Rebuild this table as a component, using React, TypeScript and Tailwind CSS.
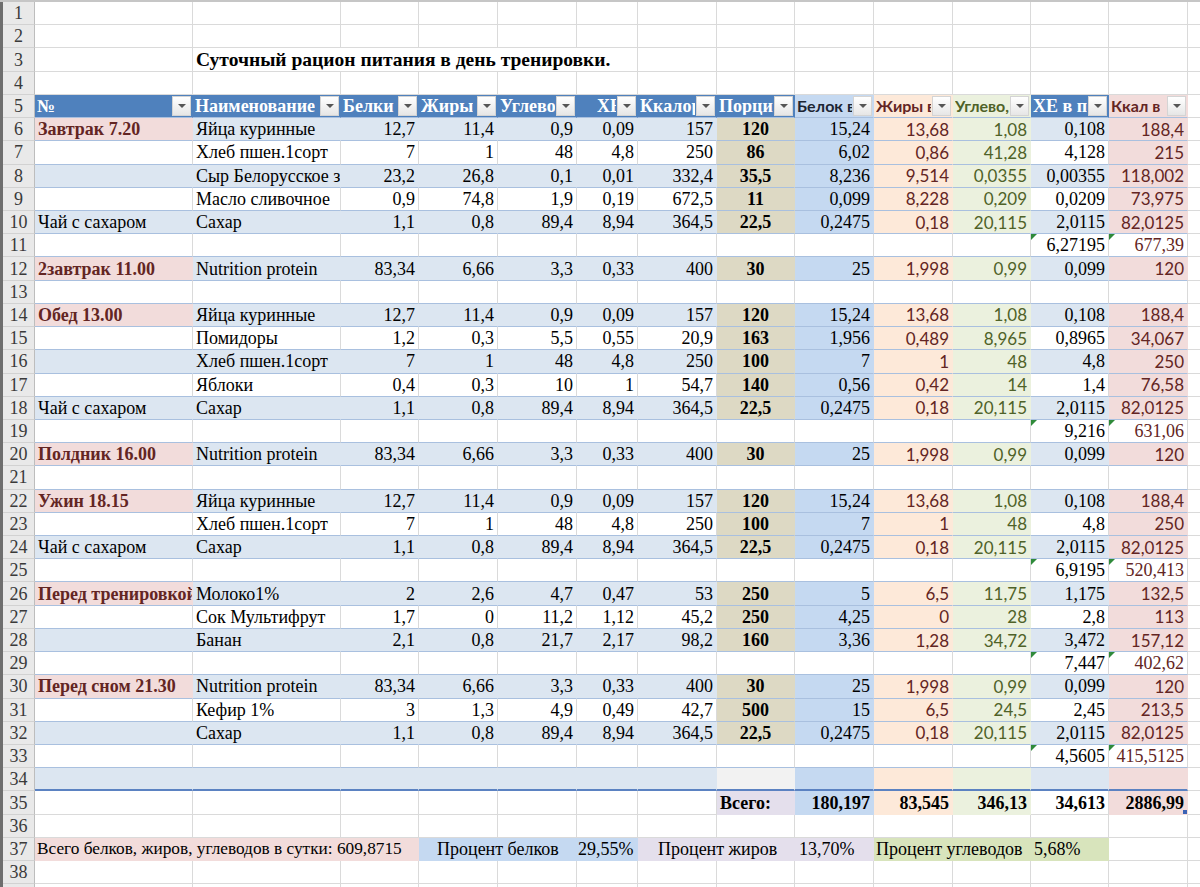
import React from 'react';

const SANS = "font-['Lato',sans-serif] text-[17px]";
const SANSH = "font-['Lato',sans-serif] text-[16px]";

const WIDTHS = [
  'w-[158px]', 'w-[148px]', 'w-[78px]', 'w-[79px]', 'w-[79px]', 'w-[61px]', 'w-[79px]',
  'w-[78px]', 'w-[79px]', 'w-[79px]', 'w-[78px]', 'w-[78px]', 'w-[79px]',
];

const BG = {
  band: 'bg-[#dce6f1]',
  hdr: 'bg-[#4f81bd]',
  pink: 'bg-[#f2dcdb]',
  khaki: 'bg-[#ddd9c4]',
  iblue: 'bg-[#c5d9f1]',
  peach: 'bg-[#fde9d9]',
  green: 'bg-[#ebf1de]',
  purple: 'bg-[#e4dfec]',
  gray: 'bg-[#f2f2f2]',
  green2: 'bg-[#d8e4bc]',
};

type CellSpec = {
  t?: string;
  bg?: string;
  al?: 'l' | 'r' | 'c';
  f?: string;
  tri?: boolean;
  btn?: boolean;
  w?: string;
  pad?: string;
  handle?: boolean;
};

type RowKind = 'plain' | 'table' | 'tableEnd';

const MEALS: Record<number, string> = {
  6: 'Завтрак 7.20',
  12: '2завтрак 11.00',
  14: 'Обед 13.00',
  20: 'Полдник 16.00',
  22: 'Ужин 18.15',
  26: 'Перед тренировкой',
  30: 'Перед сном 21.30',
};
const TEA = [10, 18, 24];

const EGGS = ['Яйца куринные', '12,7', '11,4', '0,9', '0,09', '157', '120', '15,24', '13,68', '1,08', '0,108', '188,4'];
const SUGAR = ['Сахар', '1,1', '0,8', '89,4', '8,94', '364,5', '22,5', '0,2475', '0,18', '20,115', '2,0115', '82,0125'];
const PROTEIN = ['Nutrition protein', '83,34', '6,66', '3,3', '0,33', '400', '30', '25', '1,998', '0,99', '0,099', '120'];
const BREAD100 = ['Хлеб пшен.1сорт', '7', '1', '48', '4,8', '250', '100', '7', '1', '48', '4,8', '250'];

const D: Record<number, string[]> = {
  6: EGGS,
  7: ['Хлеб пшен.1сорт', '7', '1', '48', '4,8', '250', '86', '6,02', '0,86', '41,28', '4,128', '215'],
  8: ['Сыр Белорусское золотое', '23,2', '26,8', '0,1', '0,01', '332,4', '35,5', '8,236', '9,514', '0,0355', '0,00355', '118,002'],
  9: ['Масло сливочное', '0,9', '74,8', '1,9', '0,19', '672,5', '11', '0,099', '8,228', '0,209', '0,0209', '73,975'],
  10: SUGAR,
  12: PROTEIN,
  14: EGGS,
  15: ['Помидоры', '1,2', '0,3', '5,5', '0,55', '20,9', '163', '1,956', '0,489', '8,965', '0,8965', '34,067'],
  16: BREAD100,
  17: ['Яблоки', '0,4', '0,3', '10', '1', '54,7', '140', '0,56', '0,42', '14', '1,4', '76,58'],
  18: SUGAR,
  20: PROTEIN,
  22: EGGS,
  23: BREAD100,
  24: SUGAR,
  26: ['Молоко1%', '2', '2,6', '4,7', '0,47', '53', '250', '5', '6,5', '11,75', '1,175', '132,5'],
  27: ['Сок Мультифрут', '1,7', '0', '11,2', '1,12', '45,2', '250', '4,25', '0', '28', '2,8', '113'],
  28: ['Банан', '2,1', '0,8', '21,7', '2,17', '98,2', '160', '3,36', '1,28', '34,72', '3,472', '157,12'],
  30: PROTEIN,
  31: ['Кефир 1%', '3', '1,3', '4,9', '0,49', '42,7', '500', '15', '6,5', '24,5', '2,45', '213,5'],
  32: SUGAR,
};

const SUBS: Record<number, [string, string]> = {
  11: ['6,27195', '677,39'],
  19: ['9,216', '631,06'],
  25: ['6,9195', '520,413'],
  29: ['7,447', '402,62'],
  33: ['4,5605', '415,5125'],
};

function FilterBtn() {
  return (
    <span className="absolute right-[1px] top-[1px] w-[19px] h-[20px] bg-linear-to-b from-[#ffffff] to-[#e6e6e6] border border-[#d4d4d4] flex items-center justify-center">
      <span className="w-0 h-0 border-l-[4px] border-r-[4px] border-t-[4px] border-l-transparent border-r-transparent border-t-[#555555]" />
    </span>
  );
}

function Cell({ c, w, kind }: { c: CellSpec; w: string; kind: RowKind }) {
  const filled = !!c.bg;
  const al =
    c.al === 'r'
      ? 'justify-end pr-[3px]'
      : c.al === 'c'
      ? 'justify-center'
      : `justify-start ${c.pad ?? 'pl-[3px]'}`;
  const bb =
    kind === 'tableEnd'
      ? 'border-b-2 border-b-[#5b82c2]'
      : kind === 'table'
      ? 'border-b border-b-[#a9c0df]'
      : filled
      ? 'border-b border-b-transparent'
      : 'border-b border-b-[#dadada]';
  return (
    <div
      className={`${w} shrink-0 h-full relative flex items-center overflow-hidden whitespace-nowrap border-r ${
        filled ? 'border-r-transparent' : 'border-r-[#dadada]'
      } ${bb} ${c.bg ?? ''} ${al} ${c.btn ? 'pr-[21px]' : ''} ${c.f ?? ''}`}
    >
      <span className={`leading-none ${c.btn ? 'block min-w-0 overflow-hidden' : ''}`}>{c.t}</span>
      {c.tri && (
        <span className="absolute left-0 top-0 w-0 h-0 border-t-[6px] border-t-[#2f8a3a] border-r-[6px] border-r-transparent" />
      )}
      {c.btn && <FilterBtn />}
      {c.handle && <span className="absolute right-0 bottom-0 w-[4px] h-[4px] bg-[#3b63b5]" />}
    </div>
  );
}

function RowHead({ n }: { n: number }) {
  return (
    <div className="w-[35px] shrink-0 h-full flex bg-[#e9e9e9]">
      <div className="w-[3px] h-full bg-[#6e6e6e]" />
      <div className="flex-1 flex items-center justify-center border-r border-b border-r-[#bdbdbd] border-b-[#d2d2d2] text-[#3a3a3a] leading-none">
        {n}
      </div>
    </div>
  );
}

function Row({ n, cells, kind = 'plain' }: { n: number; cells?: CellSpec[]; kind?: RowKind }) {
  const list = cells ?? Array.from({ length: 13 }, () => ({} as CellSpec));
  return (
    <div className="flex h-[23.23px]">
      <RowHead n={n} />
      {list.map((c, i) => (
        <Cell key={i} c={c} w={c.w ?? WIDTHS[i]} kind={kind} />
      ))}
      <div className="flex-1 h-full border-b border-b-[#dadada]" />
    </div>
  );
}

function bodyCells(r: number): CellSpec[] {
  const band = r % 2 === 0 ? BG.band : undefined;
  const d = D[r];
  const cells: CellSpec[] = [];
  if (MEALS[r]) cells.push({ t: MEALS[r], bg: BG.pink, f: 'font-bold text-[#632523]' });
  else if (TEA.includes(r)) cells.push({ t: 'Чай с сахаром', bg: band });
  else cells.push({ bg: band });
  cells.push({ t: d?.[0], bg: band });
  for (let i = 1; i <= 5; i++) cells.push({ t: d?.[i], bg: band, al: 'r' });
  cells.push(d ? { t: d[6], bg: BG.khaki, al: 'c', f: 'font-bold' } : { bg: band });
  cells.push(d ? { t: d[7], bg: BG.iblue, al: 'r' } : { bg: band });
  cells.push(d ? { t: d[8], bg: BG.peach, al: 'r', f: `${SANS} text-[#632523]` } : { bg: band });
  cells.push(d ? { t: d[9], bg: BG.green, al: 'r', f: `${SANS} text-[#4f6228]` } : { bg: band });
  const s = SUBS[r];
  cells.push(d ? { t: d[10], bg: band, al: 'r' } : s ? { t: s[0], al: 'r', tri: true } : { bg: band });
  cells.push(
    d
      ? { t: d[11], bg: BG.pink, al: 'r', f: `${SANS} text-[#632523]` }
      : s
      ? { t: s[1], al: 'r', tri: true, f: 'text-[#632523]' }
      : { bg: band }
  );
  return cells;
}

const HW = 'font-bold text-white';
const headerCells: CellSpec[] = [
  { t: '№', bg: BG.hdr, f: HW, btn: true, pad: 'pl-[2px]' },
  { t: 'Наименование', bg: BG.hdr, f: HW, btn: true, pad: 'pl-[2px]' },
  { t: 'Белки', bg: BG.hdr, f: HW, btn: true, pad: 'pl-[2px]' },
  { t: 'Жиры', bg: BG.hdr, f: HW, btn: true, pad: 'pl-[2px]' },
  { t: 'Углево', bg: BG.hdr, f: HW, btn: true, pad: 'pl-[2px]' },
  { t: 'ХЕ', bg: BG.hdr, f: HW, btn: true, pad: 'pl-[20px]' },
  { t: 'Ккалор', bg: BG.hdr, f: HW, btn: true, pad: 'pl-[2px]' },
  { t: 'Порци', bg: BG.hdr, f: HW, btn: true, pad: 'pl-[2px]' },
  { t: 'Белок в', bg: BG.iblue, f: `${SANSH} font-bold text-[#1c2533]`, btn: true, pad: 'pl-[2px]' },
  { t: 'Жиры в', bg: BG.peach, f: `${SANSH} font-bold text-[#632523]`, btn: true, pad: 'pl-[2px]' },
  { t: 'Углево,', bg: BG.green, f: `${SANSH} font-bold text-[#4f6228]`, btn: true, pad: 'pl-[2px]' },
  { t: 'ХЕ в п', bg: BG.hdr, f: HW, btn: true, pad: 'pl-[2px]' },
  { t: 'Ккал в', bg: BG.pink, f: `${SANSH} font-bold text-[#632523]`, btn: true, pad: 'pl-[2px]' },
];

const row3: CellSpec[] = [
  { w: 'w-[158px]' },
  { w: 'w-[445px]', t: 'Суточный рацион питания в день тренировки.', f: 'font-bold text-[19.5px]' },
  { w: 'w-[79px]' },
  { w: 'w-[78px]' },
  { w: 'w-[79px]' },
  { w: 'w-[79px]' },
  { w: 'w-[78px]' },
  { w: 'w-[78px]' },
  { w: 'w-[79px]' },
];

const row34: CellSpec[] = [
  { bg: BG.band }, { bg: BG.band }, { bg: BG.band }, { bg: BG.band }, { bg: BG.band }, { bg: BG.band }, { bg: BG.band },
  { bg: BG.gray }, { bg: BG.iblue }, { bg: BG.peach }, { bg: BG.green }, { bg: BG.band }, { bg: BG.pink },
];

const row35: CellSpec[] = [
  {}, {}, {}, {}, {}, {}, {},
  { t: 'Всего:', bg: BG.purple, f: 'font-bold' },
  { t: '180,197', bg: BG.iblue, f: 'font-bold', al: 'r' },
  { t: '83,545', bg: BG.peach, f: 'font-bold', al: 'r' },
  { t: '346,13', bg: BG.green, f: 'font-bold', al: 'r' },
  { t: '34,613', f: 'font-bold', al: 'r' },
  { t: '2886,99', bg: BG.pink, f: 'font-bold', al: 'r', handle: true },
];

const row37: CellSpec[] = [
  { w: 'w-[384px]', t: 'Всего белков, жиров, углеводов в сутки: 609,8715', bg: BG.pink, pad: 'pl-[2px]', f: 'text-[17.3px]' },
  { w: 'w-[158px]', t: 'Процент белков', bg: BG.iblue, pad: 'pl-[18px]' },
  { w: 'w-[61px]', t: '29,55%', bg: BG.iblue, pad: 'pl-[1px]' },
  { w: 'w-[157px]', t: 'Процент жиров', bg: BG.purple, pad: 'pl-[20px]' },
  { w: 'w-[79px]', t: '13,70%', bg: BG.purple, pad: 'pl-[4px]' },
  { w: 'w-[157px]', t: 'Процент углеводов', bg: BG.green2, pad: 'pl-[2px]' },
  { w: 'w-[78px]', t: '5,68%', bg: BG.green2, pad: 'pl-[3px]' },
  { w: 'w-[79px]' },
];

export default function App() {
  const rows: React.ReactNode[] = [];
  for (let n = 1; n <= 39; n++) {
    if (n === 3) rows.push(<Row key={n} n={n} cells={row3} />);
    else if (n === 5) rows.push(<Row key={n} n={n} cells={headerCells} kind="table" />);
    else if (n >= 6 && n <= 33) rows.push(<Row key={n} n={n} cells={bodyCells(n)} kind="table" />);
    else if (n === 34) rows.push(<Row key={n} n={n} cells={row34} kind="tableEnd" />);
    else if (n === 35) rows.push(<Row key={n} n={n} cells={row35} />);
    else if (n === 37) rows.push(<Row key={n} n={n} cells={row37} />);
    else rows.push(<Row key={n} n={n} />);
  }
  return (
    <div className="w-[1200px] h-[887px] overflow-hidden bg-white text-[18px] text-black font-['Liberation_Serif',serif]">
      <div className="h-[2px] bg-[#c6c6c6]" />
      {rows}
    </div>
  );
}
